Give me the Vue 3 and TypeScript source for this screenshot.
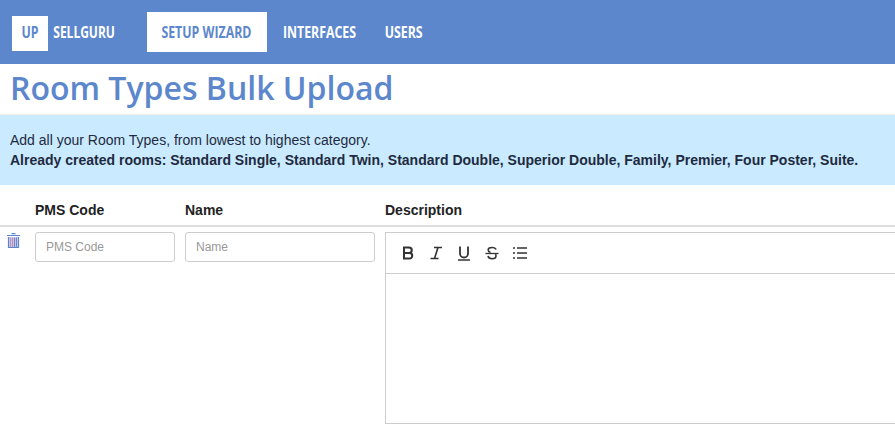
<script setup lang="ts">
const nav = ['SETUP WIZARD', 'INTERFACES', 'USERS']
</script>

<template>
  <div class="page">
    <header class="bar">
      <div class="logo"><span class="cond">UP</span></div>
      <div class="brand"><span class="cond">SELLGURU</span></div>
      <nav class="nav">
        <a v-for="(n, i) in nav" :key="n" class="item" :class="{ on: i === 0 }"><span class="cond">{{ n }}</span></a>
      </nav>
    </header>
    <h1 class="title">Room Types Bulk Upload</h1>
    <section class="info">
      <div>Add all your Room Types, from lowest to highest category.</div>
      <div class="strong">Already created rooms: Standard Single, Standard Twin, Standard Double, Superior Double, Family, Premier, Four Poster, Suite.</div>
    </section>
    <div class="heads">
      <div class="h1">PMS Code</div>
      <div class="h2">Name</div>
      <div>Description</div>
    </div>
    <div class="row">
      <svg class="trash" width="13" height="15" viewBox="0 0 13 15">
        <path d="M4.500.6h4M0 2.500h13" stroke="#5b86cc" stroke-width="1.200" fill="none"/>
        <rect x="1.500" y="4" width="10" height="10.500" fill="#d9d4ea"/>
        <path d="M3.500 4.500v10M5.500 4.500v10" stroke="#b98fbc" stroke-width="1.200"/>
        <path d="M7.500 4.500v10M9.500 4.500v10" stroke="#6f84d0" stroke-width="1.200"/>
        <path d="M1.500 4v10.500h10V4" stroke="#5b86cc" stroke-width="1.200" fill="none"/>
      </svg>
      <input class="field f1" placeholder="PMS Code" />
      <input class="field f2" placeholder="Name" />
      <div class="editor">
        <div class="tools">
          <svg width="18" height="18" viewBox="0 0 18 18"><path d="M5 3.500h5a2.700 2.700 0 0 1 0 5.500H5zM5 9h5.500a2.700 2.700 0 0 1 0 5.500H5z" fill="none" stroke="#333" stroke-width="2"/></svg>
          <svg width="18" height="18" viewBox="0 0 18 18"><path d="M7 3.500h8M3.500 14.500h8M11 3.500l-3.500 11" fill="none" stroke="#333" stroke-width="1.600"/></svg>
          <svg width="18" height="18" viewBox="0 0 18 18"><path d="M5 2.500v7a4 4 0 0 0 8 0v-7" fill="none" stroke="#333" stroke-width="1.800"/><path d="M3 16h12" stroke="#333" stroke-width="1.500"/></svg>
          <svg width="18" height="18" viewBox="0 0 18 18"><path d="M13 5.500c-.5-1.500-2-2-4-2-2.500 0-3.800 1-3.800 2.500 0 1.300.8 2 2.300 2.500M5 12c.4 1.800 2 2.700 4 2.700 2.500 0 4-.9 4-2.700 0-.7-.2-1.300-.6-1.800" fill="none" stroke="#333" stroke-width="1.600"/><path d="M2.500 9.500h13" stroke="#333" stroke-width="1.300"/></svg>
          <svg width="18" height="18" viewBox="0 0 18 18"><path d="M6 4h10M6 9h10M6 14h10" stroke="#333" stroke-width="1.500"/><path d="M2 4h2M2 9h2M2 14h2" stroke="#333" stroke-width="1.500"/></svg>
        </div>
        <div class="body"></div>
      </div>
    </div>
  </div>
</template>

<style scoped>
.page { width: 895px; height: 425px; overflow: hidden; background: #fff; font-family: "Liberation Sans", Arial, sans-serif; font-size: 14px; color: #222; }
.bar { height: 64px; background: #5c87cc; display: flex; align-items: center; font-family: "Open Sans", sans-serif; font-weight: 700; font-size: 16px; color: #fff; }
.cond { display: inline-block; transform: scaleX(0.77); white-space: nowrap; }
.logo { width: 36px; height: 35px; box-sizing: border-box; padding-bottom: 4px; margin: 3px 0 0 12px; background: #fff; color: #5c87cc; display: flex; align-items: center; justify-content: center; flex: none; }
.brand { width: 62px; margin-left: 5px; display: flex; justify-content: center; margin-right: 31px; flex: none; }
.brand .cond { transform: scaleX(0.75); }
.nav { display: flex; align-self: flex-start; margin-top: 12px; margin-left: 1px; }
.item { height: 40px; display: flex; align-items: center; justify-content: center; width: 120px; }
.item:first-child .cond { position: relative; left: -1px; }
.item:nth-child(2) { width: 105px; }
.item:nth-child(3) { width: 53px; margin-left: 5px; }
.item.on { background: #fff; color: #5c87cc; }
.title { margin: 0; height: 50px; padding-left: 10px; font-family: "Open Sans", sans-serif; font-weight: 600; font-size: 32px; line-height: 48px; color: #5c87cc; }
.info { height: 71px; box-sizing: border-box; background: #c9eaff; padding: 15px 10px 0; line-height: 20px; border-top: 1px solid #eee; color: #1f2a40; }
.strong { font-weight: 700; }
.heads { display: flex; height: 42px; box-sizing: border-box; padding: 17px 0 0 35px; font-weight: 700; border-bottom: 2px solid #ddd; line-height: 16px; }
.h1 { width: 150px; }
.h2 { width: 200px; }
.row { display: flex; align-items: flex-start; padding: 5px 0 0 7px; }
.trash { margin-right: 15px; margin-top: 1px; flex: none; }
.field { box-sizing: border-box; height: 30px; width: 140px; border: 1px solid #ccc; border-radius: 3px; padding: 0 10px; font: 12px "Liberation Sans", sans-serif; outline: none; flex: none; }
.field::placeholder { color: #999; }
.f1 { margin-right: 10px; }
.f2 { width: 190px; margin-right: 10px; }
.editor { width: 530px; height: 192px; box-sizing: border-box; border: 1px solid #ccc; flex: none; }
.tools { height: 41px; box-sizing: border-box; border-bottom: 1px solid #ccc; display: flex; align-items: center; gap: 10px; padding: 0 13px; }
</style>
